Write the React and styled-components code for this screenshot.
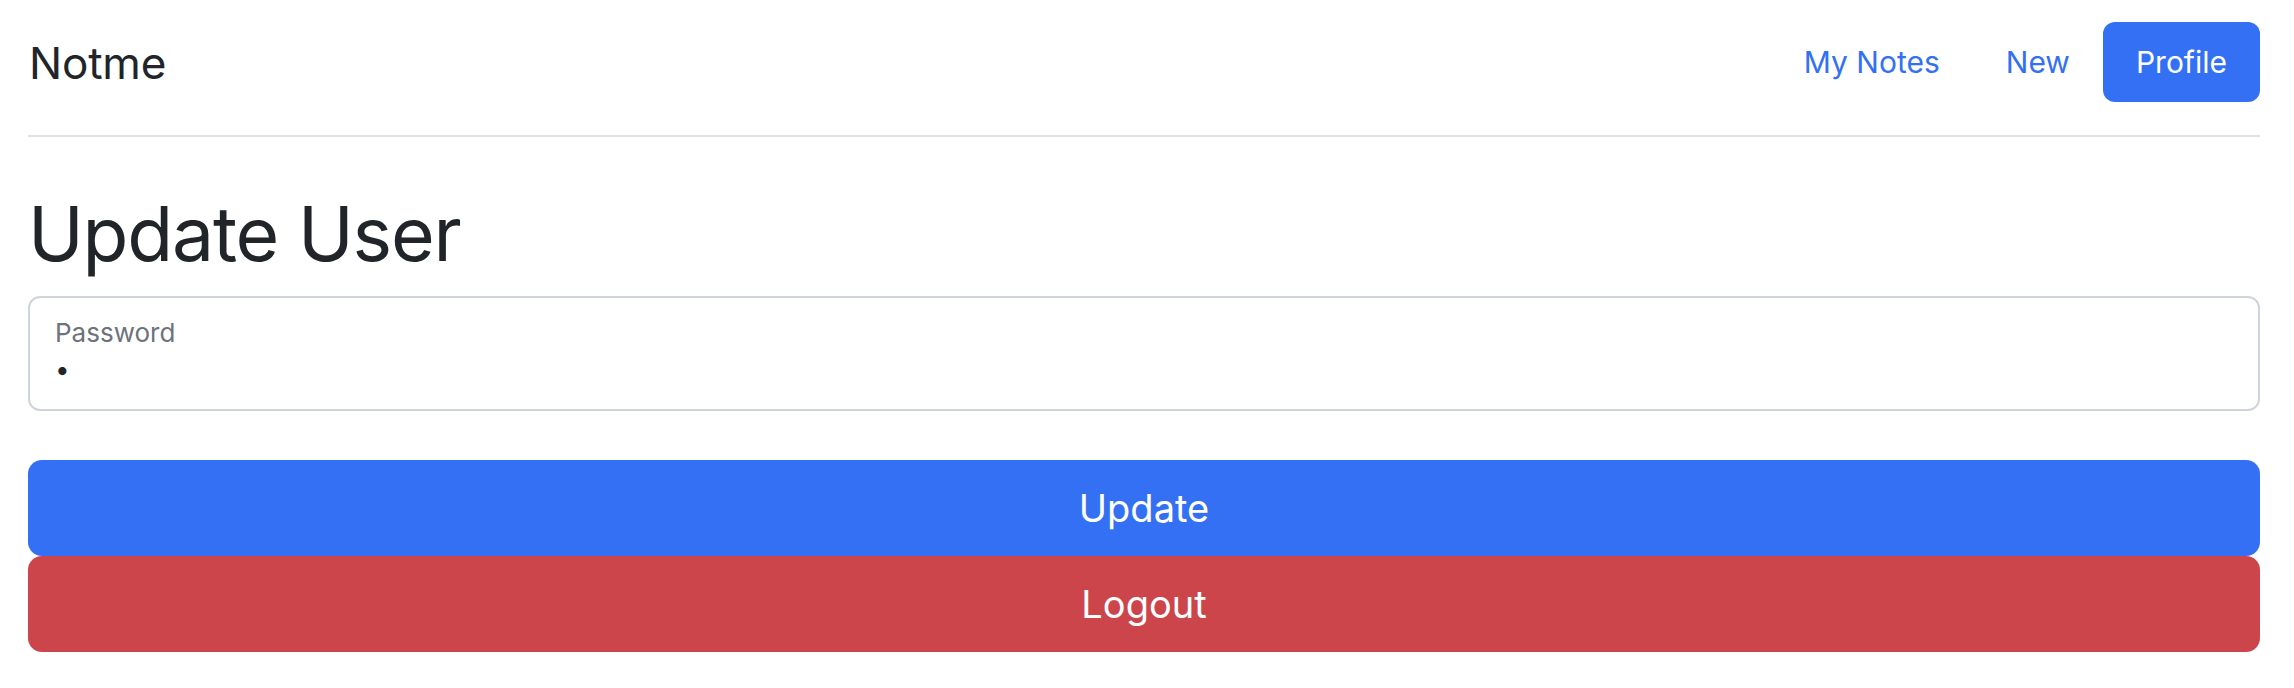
import styled, { createGlobalStyle } from 'styled-components'

const GlobalStyle = createGlobalStyle`
  html, body {
    margin: 0;
    padding: 0;
    background: #ffffff;
  }
  body {
    font-family: Inter, "Liberation Sans", Arial, sans-serif;
    color: #212529;
  }
`

const Page = styled.main`
  padding: 0 34px 0 28px;
`

const Header = styled.header`
  height: 124px;
  padding-bottom: 11px;
  display: flex;
  align-items: center;
  justify-content: space-between;
  border-bottom: 2px solid #dee2e6;
`

const Brand = styled.a`
  font-size: 44px;
  color: #212529;
  text-decoration: none;
  letter-spacing: -0.2px;
  margin-left: 1px;
  margin-top: 2px;
`

const Nav = styled.nav`
  display: flex;
  align-items: center;
`

const NavLink = styled.a`
  display: flex;
  align-items: center;
  height: 80px;
  padding: 0 33px;
  border-radius: 12px;
  font-size: 30px;
  text-decoration: none;
  color: ${(p) => (p.$active ? '#ffffff' : '#3370f3')};
  background: ${(p) => (p.$active ? '#3370f3' : 'transparent')};
`

const Title = styled.h1`
  margin: 50px 0 15px 0;
  font-size: 75px;
  font-weight: 400;
  line-height: 1.25;
  letter-spacing: -1.2px;
`

const Field = styled.label`
  display: flex;
  flex-direction: column;
  height: 115px;
  box-sizing: border-box;
  border: 2px solid #ced4da;
  border-radius: 12px;
  padding: 19px 25px 0 25px;
`

const FieldLabel = styled.span`
  font-size: 26px;
  line-height: 1.2;
  color: #6c737a;
`

const FieldInput = styled.input`
  border: none;
  outline: none;
  padding: 0;
  margin: 2px 0 0 0;
  font-family: inherit;
  font-size: 26px;
  height: 40px;
  color: #212529;
  background: transparent;
`

const Actions = styled.div`
  display: flex;
  flex-direction: column;
  margin-top: 49px;
`

const Button = styled.button`
  height: 96px;
  border: none;
  border-radius: 14px;
  font-family: inherit;
  font-size: 38px;
  color: #ffffff;
  background: ${(p) => p.$bg};
  cursor: pointer;
`

export default function App() {
  return (
    <Page>
      <GlobalStyle />
      <Header>
        <Brand href="#">Notme</Brand>
        <Nav>
          <NavLink href="#">My Notes</NavLink>
          <NavLink href="#">New</NavLink>
          <NavLink href="#" $active>
            Profile
          </NavLink>
        </Nav>
      </Header>
      <Title>Update User</Title>
      <Field>
        <FieldLabel>Password</FieldLabel>
        <FieldInput type="password" defaultValue="a" />
      </Field>
      <Actions>
        <Button $bg="#3370f3">Update</Button>
        <Button $bg="#cb454b">Logout</Button>
      </Actions>
    </Page>
  )
}
